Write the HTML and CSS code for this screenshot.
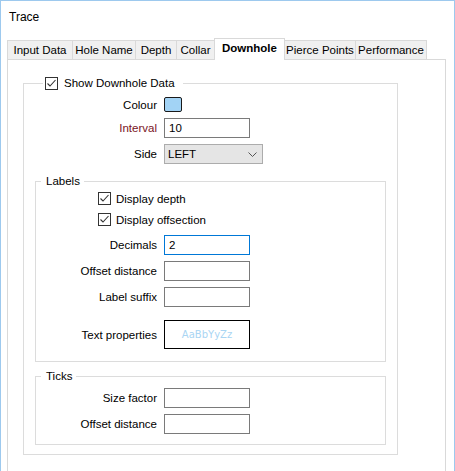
FILE: index.html
```html
<!DOCTYPE html>
<html>
<head>
<meta charset="utf-8">
<title>Trace</title>
<link rel="stylesheet" href="styles.css">
</head>
<body>
<div class="window">
  <div class="title">Trace</div>
  <div class="tabs">
    <div class="tab t-input">Input Data</div>
    <div class="tab t-hole">Hole Name</div>
    <div class="tab t-depth">Depth</div>
    <div class="tab t-collar">Collar</div>
    <div class="tab t-down active">Downhole</div>
    <div class="tab t-pierce">Pierce Points</div>
    <div class="tab t-perf">Performance</div>
  </div>
  <div class="panel">
    <fieldset class="group outer">
      <legend class="legend-check"><span class="check"><svg width="11" height="11" viewBox="0 0 11 11"><polyline points="1.5,5.5 4,8 9.5,2" fill="none" stroke="#333" stroke-width="1.1"/></svg></span><span class="ltext">Show Downhole Data</span></legend>
      <div class="row row-swatch"><span class="lbl">Colour</span><span class="swatch"></span></div>
      <div class="row row-field"><span class="lbl lbl-red">Interval</span><span class="field">10</span></div>
      <div class="row row-field"><span class="lbl">Side</span><span class="select"><span>LEFT</span><svg width="9" height="5" viewBox="0 0 9 5"><polyline points="0.5,0.5 4.5,4.5 8.5,0.5" fill="none" stroke="#555" stroke-width="1"/></svg></span></div>

      <fieldset class="group inner labels">
        <legend class="legend-text">Labels</legend>
        <div class="crow crow-first"><span class="check"><svg width="11" height="11" viewBox="0 0 11 11"><polyline points="1.5,5.5 4,8 9.5,2" fill="none" stroke="#333" stroke-width="1.1"/></svg></span><span>Display depth</span></div>
        <div class="crow crow-second"><span class="check"><svg width="11" height="11" viewBox="0 0 11 11"><polyline points="1.5,5.5 4,8 9.5,2" fill="none" stroke="#333" stroke-width="1.1"/></svg></span><span>Display offsection</span></div>
        <div class="row row-field row-after-checks"><span class="lbl">Decimals</span><span class="field focused">2</span></div>
        <div class="row row-field"><span class="lbl">Offset distance</span><span class="field"></span></div>
        <div class="row row-field"><span class="lbl">Label suffix</span><span class="field"></span></div>
        <div class="row row-textprops"><span class="lbl">Text properties</span><span class="textprops">AaBbYyZz</span></div>
      </fieldset>

      <fieldset class="group inner ticks">
        <legend class="legend-text">Ticks</legend>
        <div class="row row-field row-first-tick"><span class="lbl">Size factor</span><span class="field"></span></div>
        <div class="row row-field"><span class="lbl">Offset distance</span><span class="field"></span></div>
      </fieldset>
    </fieldset>
  </div>
</div>
</body>
</html>
```
FILE: styles.css
```css
* { box-sizing: border-box; }
html, body { margin: 0; padding: 0; background: #fff; }
body {
  font-family: "Liberation Sans", Arial, sans-serif;
  font-size: 11.5px;
  color: #000;
}
.window {
  width: 455px;
  height: 471px;
  border: 1px solid #9dc9ee;
  border-bottom: none;
  overflow: hidden;
  background: #fff;
}
.title {
  height: 37px;
  padding: 8px 0 0 8px;
  line-height: 16px;
  font-size: 12px;
}
.tabs {
  display: flex;
  align-items: flex-end;
  height: 21px;
  margin-left: 6px;
  position: relative;
  z-index: 1;
}
.tab {
  height: 19px;
  line-height: 18px;
  background: #f0f0f0;
  border: 1px solid #d9d9d9;
  border-bottom: none;
  margin-right: -1px;
  white-space: nowrap;
  text-align: center;
}
.t-input { width: 66px; }
.t-hole { width: 64px; }
.t-depth { width: 42px; }
.t-collar { width: 39px; }
.t-down { width: 71px; }
.t-pierce { width: 72px; }
.t-perf { width: 72px; }
.tab.active {
  height: 22px;
  line-height: 19px;
  margin-bottom: -1px;
  background: #fff;
  font-weight: bold;
  position: relative;
  z-index: 2;
}
.panel {
  width: 439px;
  height: 520px;
  margin-left: 6px;
  border: 1px solid #d9d9d9;
  padding: 16px 0 0 15px;
}
fieldset {
  margin: 0;
  min-width: 0;
  border: 1px solid #dcdcdc;
}
legend {
  height: 14px;
  line-height: 14px;
  padding: 0;
}
.outer {
  width: 375px;
  padding: 0 10px 9px 11px;
}
.legend-check {
  margin-left: 8px;
  padding: 0 8px 0 2px;
}
.legend-check .check { margin-top: 1px; vertical-align: top; margin-right: 6px; }
.legend-check .ltext { vertical-align: top; }
.legend-text {
  margin-left: 5px;
  padding: 0 4px 0 5px;
}
.check {
  display: inline-block;
  width: 13px;
  height: 13px;
  border: 1px solid #333;
  background: #fff;
}
.check svg { display: block; }
.row {
  display: grid;
  grid-template-columns: 122px 1fr;
  column-gap: 7px;
  align-items: center;
}
.inner .row { grid-template-columns: 121px 1fr; }
.lbl { text-align: right; white-space: nowrap; }
.lbl-red { color: #7a1424; }
.row-swatch { height: 15px; margin-top: 7px; }
.row-field { height: 20px; margin-top: 6px; }
.swatch {
  width: 18px;
  height: 15px;
  border: 1px solid #1a1a1a;
  border-radius: 2px;
  background: #a2d3f5;
}
.field {
  width: 86px;
  height: 20px;
  border: 1px solid #7a7a7a;
  padding-left: 4px;
  line-height: 18px;
}
.field.focused { border-color: #0078d7; }
.select {
  width: 99px;
  height: 20px;
  border: 1px solid #acacac;
  background: #e5e5e5;
  display: flex;
  align-items: center;
  justify-content: space-between;
  padding: 0 5px 0 3px;
}
.select svg { display: block; }
.inner {
  width: 351px;
  padding: 0;
}
.labels { margin-top: 10px; padding-bottom: 12px; }
.ticks { margin-top: 7px; padding-bottom: 10px; }
.crow {
  display: flex;
  align-items: center;
  height: 13px;
  margin-left: 62px;
  gap: 5px;
}
.crow-first { margin-top: 4px; }
.crow-second { margin-top: 8px; }
.row-after-checks { margin-top: 9px; }
.row-textprops { height: 29px; margin-top: 13px; }
.textprops {
  width: 86px;
  height: 29px;
  border: 1px solid #000;
  display: flex;
  align-items: center;
  justify-content: center;
  font-family: "DejaVu Sans", Verdana, sans-serif;
  font-size: 10px;
  color: #a9d5f3;
}
.row-first-tick { margin-top: 5px; }
```
